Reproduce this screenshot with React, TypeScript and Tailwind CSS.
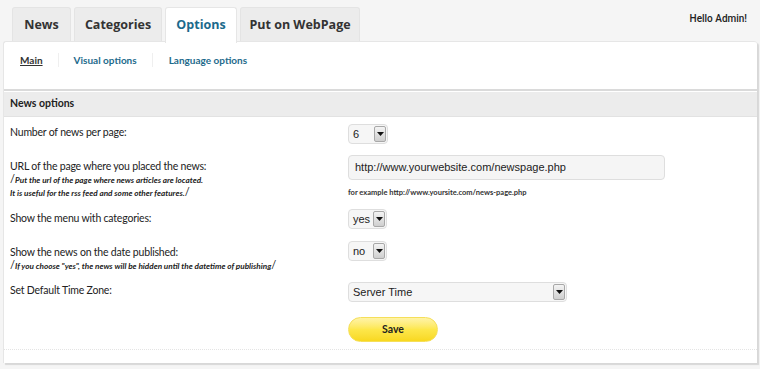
import React from "react";

type Tab = { label: string; width: string; active?: boolean };

const tabs: Tab[] = [
  { label: "News", width: "w-[59px]" },
  { label: "Categories", width: "w-[88px]" },
  { label: "Options", width: "w-[72px]", active: true },
  { label: "Put on WebPage", width: "w-[120px]" },
];

function Arrow() {
  return (
    <span className="flex h-full w-[12px] items-center justify-center rounded-[2px] border border-[#a8a8a8] bg-gradient-to-b from-[#f4f4f4] to-[#cfcfcf]">
      <svg width="7" height="4" viewBox="0 0 7 4">
        <path d="M0 0h7L3.5 4z" fill="#111" />
      </svg>
    </span>
  );
}

function Select({ value, width }: { value: string; width: string }) {
  return (
    <div
      className={`flex h-[20px] ${width} items-center justify-between rounded-[4px] border border-[#dedede] bg-[#f6f6f6] pl-[4px] pr-[1px] py-[1px] font-['Liberation_Sans',sans-serif] text-[11px] text-[#222]`}
    >
      <span>{value}</span>
      <Arrow />
    </div>
  );
}

function Note({ children }: { children: React.ReactNode }) {
  return (
    <div className="font-['Lato',sans-serif] text-[8.2px] font-bold italic leading-[12px] tracking-normal text-[#222]">
      {children}
    </div>
  );
}

export default function App() {
  return (
    <div className="h-[369px] w-[760px] overflow-hidden bg-[#f5f5f5] font-['Lato',sans-serif]">
      {/* tabs */}
      <div className="flex h-[41px] items-start justify-between pl-[12px] pr-[13px]">
        <div className="flex gap-[3px] pt-[7px]">
          {tabs.map((t) => (
            <div
              key={t.label}
              className={`flex ${t.width} items-center justify-center rounded-t-[3px] border border-b-0 pt-[2px] font-['Open_Sans',sans-serif] text-[12.5px] font-bold ${
                t.active
                  ? "relative z-10 h-[36px] border-[#e6e6e6] bg-white pb-[2px] text-[#1b6a8c]"
                  : "h-[34px] border-[#e4e4e4] bg-[#ececec] text-[#333]"
              }`}
            >
              {t.label}
            </div>
          ))}
        </div>
        <div className="pt-[11px] font-['Roboto',sans-serif] text-[10px] font-medium text-[#222]">
          Hello Admin!
        </div>
      </div>

      {/* panel */}
      <div className="ml-[3px] w-[754px] rounded-t-[3px] border-l border-t border-[#e6e6e6] bg-white shadow-[2px_2px_1px_#d8d8d8]">
        {/* sub nav */}
        <div className="flex h-[49px] items-start border-b-2 border-[#dadada] pt-[11px] text-[10px] font-bold">
          <a className="pl-[16px] pr-[15px] text-[#333] underline">Main</a>
          <span className="h-[14px] w-px bg-[#efefef]" />
          <a className="px-[15px] text-[#1e6b8c]">Visual options</a>
          <span className="h-[14px] w-px bg-[#efefef]" />
          <a className="px-[16px] text-[#1e6b8c]">Language options</a>
        </div>

        <div className="mt-[1px] flex h-[25px] items-center border-b border-[#e2e2e2] bg-[#ececec] pl-[6px] text-[10.5px] font-bold text-[#222]">
          News options
        </div>

        <div className="pl-[6px] text-[10.5px] leading-[13px] tracking-[-0.2px] text-[#222]">
          {/* row 1 */}
          <div className="flex items-start pt-[7px]">
            <div className="w-[338px] pt-[2px]">Number of news per page:</div>
            <Select value="6" width="w-[40px]" />
          </div>

          {/* row 2 */}
          <div className="flex items-start pt-[11px]">
            <div className="w-[338px] pt-[5px]">
              <div>URL of the page where you placed the news:</div>
              <Note>
                <span className="text-[11px] font-normal not-italic">/</span>
                Put the url of the page where news articles are located.
              </Note>
              <Note>
                It is useful for the rss feed and some other features.
                <span className="text-[11px] font-normal not-italic">/</span>
              </Note>
            </div>
            <div className="tracking-normal">
              <div className="flex h-[25px] w-[317px] items-center rounded-[4px] border border-[#dedede] bg-[#f5f5f5] pl-[6px] font-['Liberation_Sans',sans-serif] text-[11px] text-[#222]">
                http://www.yourwebsite.com/newspage.php
              </div>
              <div className="mt-[8px] text-[7.5px] font-bold leading-[10px] text-[#333]">
                for example http://www.yoursite.com/news-page.php
              </div>
            </div>
          </div>

          {/* row 3 */}
          <div className="flex items-start pt-[10px]">
            <div className="w-[338px] pt-[3px]">Show the menu with categories:</div>
            <div className="h-[22px] tracking-normal">
              <Select value="yes" width="w-[39px]" />
            </div>
          </div>

          {/* row 4 */}
          <div className="flex items-start pt-[10px]">
            <div className="w-[338px] pt-[5px]">
              <div>Show the news on the date published:</div>
              <Note>
                <span className="text-[11px] font-normal not-italic">/</span>
                If you choose "yes", the news will be hidden until the datetime of publishing
                <span className="text-[11px] font-normal not-italic">/</span>
              </Note>
            </div>
            <div className="tracking-normal">
              <Select value="no" width="w-[39px]" />
            </div>
          </div>

          {/* row 5 */}
          <div className="flex items-start pt-[10px]">
            <div className="w-[338px] pt-[2px]">Set Default Time Zone:</div>
            <div className="tracking-normal">
              <Select value="Server Time" width="w-[219px]" />
            </div>
          </div>

          {/* save */}
          <div className="flex pt-[15px]">
            <div className="w-[338px]" />
            <button className="h-[25px] w-[90px] rounded-full border border-[#f5df5a] bg-gradient-to-b from-[#fff3a6] via-[#fde74a] to-[#f8d81e] text-[10.5px] font-bold tracking-normal text-[#222]">
              Save
            </button>
          </div>
        </div>

        <div className="mt-[7px] h-[14px] border-t border-dotted border-[#e4e4e4]" />
      </div>
    </div>
  );
}
